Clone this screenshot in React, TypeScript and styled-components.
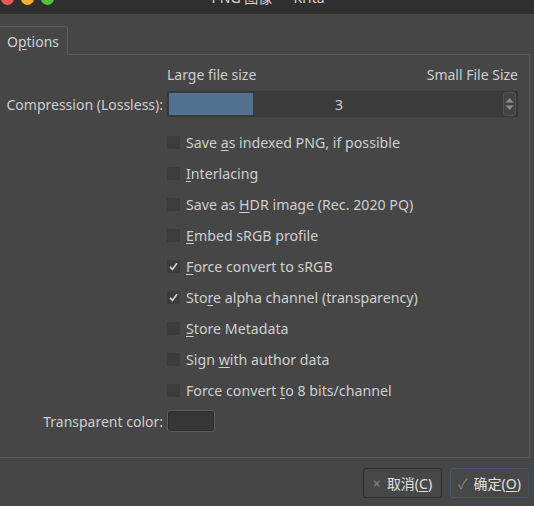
import { createGlobalStyle, styled } from "styled-components";

const GlobalStyle = createGlobalStyle`
  html, body {
    margin: 0;
    padding: 0;
    background: #464646;
  }
  body {
    font-family: "Noto Sans", "Noto Sans CJK SC", sans-serif;
    font-size: 14px;
    color: #cdcfd1;
    overflow: hidden;
  }
`;

interface CheckOption {
  label: React.ReactNode;
  checked?: boolean;
}

const options: CheckOption[] = [
  { label: <>Save <U>a</U>s indexed PNG, if possible</> },
  { label: <><U>I</U>nterlacing</> },
  { label: <>Save as <U>H</U>DR image (Rec. 2020 PQ)</> },
  { label: <><U>E</U>mbed sRGB profile</> },
  { label: <><U>F</U>orce convert to sRGB</>, checked: true },
  { label: <>Sto<U>r</U>e alpha channel (transparency)</>, checked: true },
  { label: <><U>S</U>tore Metadata</> },
  { label: <>Sign <U>w</U>ith author data</> },
  { label: <>Force convert <U>t</U>o 8 bits/channel</> },
];

function U({ children }: { children: React.ReactNode }) {
  return <Mnemonic>{children}</Mnemonic>;
}

export default function App() {
  return (
    <Window>
      <GlobalStyle />
      <TitleBar>
        <Lights>
          <Light $color="#ed5b55" />
          <Light $color="#f5b12a" />
          <Light $color="#56c23d" />
        </Lights>
        <Title>PNG 图像 — Krita</Title>
      </TitleBar>

      <TabBar>
        <Tab>
          O<U>p</U>tions
        </Tab>
      </TabBar>

      <Panel>
        <Row $height={17}>
          <span />
          <SizeHints>
            <span>Large file size</span>
            <span>Small File Size</span>
          </SizeHints>
        </Row>

        <Row $height={26} $top={8}>
          <Label>Compression (Lossless):</Label>
          <SpinSlider>
            <SliderFill style={{ width: `${(3 / 9) * 100 * 0.72}%` }} />
            <SliderValue>3</SliderValue>
            <SpinButtons>
              <svg width="9" height="20" viewBox="0 0 9 20">
                <path d="M4.5 4 L8.5 8.5 L0.5 8.5 Z" fill="#8e8e8e" />
                <path d="M4.5 16 L8.5 11.5 L0.5 11.5 Z" fill="#8e8e8e" />
              </svg>
            </SpinButtons>
          </SpinSlider>
        </Row>

        <CheckList>
          {options.map((opt, i) => (
            <Row key={i} $height={31}>
              <span />
              <CheckRow>
                <Box>
                  {opt.checked && (
                    <svg width="13" height="13" viewBox="0 0 13 13">
                      <path
                        d="M3 6.8 L5.4 9.4 L10 3.2"
                        fill="none"
                        stroke="#d4d4d4"
                        strokeWidth="1.6"
                      />
                    </svg>
                  )}
                </Box>
                <CheckText>{opt.label}</CheckText>
              </CheckRow>
            </Row>
          ))}
        </CheckList>

        <Row $height={22} $top={4}>
          <Label>Transparent color:</Label>
          <div>
            <ColorButton />
          </div>
        </Row>
      </Panel>

      <Footer>
        <DialogButton>
          <BtnIcon>×</BtnIcon>
          <span>
            取消(<U>C</U>)
          </span>
        </DialogButton>
        <DialogButton $primary>
          <BtnIcon>✓</BtnIcon>
          <span>
            确定(<U>O</U>)
          </span>
        </DialogButton>
      </Footer>
    </Window>
  );
}

const Window = styled.div`
  width: 534px;
  height: 506px;
  display: flex;
  flex-direction: column;
  background: #464646;
  overflow: hidden;
`;

const TitleBar = styled.div`
  position: relative;
  height: 14px;
  background: #2f2f2f;
  overflow: hidden;
  display: flex;
  justify-content: center;
`;

const Lights = styled.div`
  position: absolute;
  left: 1px;
  top: -8px;
  display: flex;
  gap: 7px;
`;

const Light = styled.div<{ $color: string }>`
  width: 13px;
  height: 13px;
  border-radius: 50%;
  background: ${(p) => p.$color};
`;

const Title = styled.div`
  margin-top: -12px;
  font-size: 14px;
  line-height: 20px;
  color: #d8d8d8;
  padding-left: 2px;
  white-space: nowrap;
`;

const TabBar = styled.div`
  display: flex;
  margin-top: 12px;
  height: 28px;
`;

const Tab = styled.div`
  width: 69px;
  box-sizing: border-box;
  margin-left: -1px;
  padding-left: 7px;
  border: 1px solid #5a5a5a;
  border-bottom: none;
  border-radius: 0 3px 0 0;
  background: #464646;
  display: flex;
  align-items: center;
  margin-bottom: -1px;
  position: relative;
  z-index: 1;
  color: #cfd3d6;
`;

const Panel = styled.div`
  margin-left: -1px;
  width: 531px;
  height: 404px;
  box-sizing: border-box;
  border: 1px solid #5a5a5a;
  padding: 11px 0 0 6px;
  display: flex;
  flex-direction: column;
`;

const Row = styled.div<{ $height: number; $top?: number }>`
  display: grid;
  grid-template-columns: 157px 351px;
  column-gap: 4px;
  align-items: center;
  height: ${(p) => p.$height}px;
  margin-top: ${(p) => p.$top ?? 0}px;
`;

const Label = styled.div`
  text-align: right;
  white-space: nowrap;
`;

const SizeHints = styled.div`
  display: flex;
  justify-content: space-between;
  line-height: 17px;
`;

const SpinSlider = styled.div`
  position: relative;
  height: 26px;
  box-sizing: border-box;
  background: #3b3b3b;
  border: 1px solid #363636;
  border-radius: 2px;
  display: flex;
  align-items: center;
`;

const SliderFill = styled.div`
  position: absolute;
  left: 1px;
  top: 1px;
  bottom: 1px;
  background: #52718e;
`;

const SliderValue = styled.span`
  position: relative;
  flex: 1;
  text-align: center;
  padding-left: 7px;
`;

const SpinButtons = styled.div`
  width: 11px;
  height: 22px;
  margin-right: 1px;
  border: 1px solid #555;
  border-radius: 3px;
  display: flex;
  align-items: center;
  justify-content: center;
  background: #434343;
`;

const CheckList = styled.div`
  display: flex;
  flex-direction: column;
  margin-top: 10px;
`;

const CheckRow = styled.div`
  display: flex;
  align-items: center;
  gap: 6px;
`;

const Box = styled.div`
  width: 13px;
  height: 13px;
  background: #3c3c3c;
  display: flex;
  align-items: center;
  justify-content: center;
`;

const CheckText = styled.span`
  white-space: nowrap;
  font-size: 14.2px;
`;

const Mnemonic = styled.span`
  text-decoration: underline;
  text-underline-offset: 2px;
`;

const ColorButton = styled.div`
  width: 48px;
  height: 22px;
  box-sizing: border-box;
  border: 1px solid #5c5c5c;
  border-radius: 3px;
  background: #363636;
  box-shadow: inset 0 0 0 1px #2e2e2e;
`;

const Footer = styled.div`
  display: flex;
  justify-content: flex-end;
  gap: 8px;
  padding: 10px 5px 0 0;
`;

const DialogButton = styled.button<{ $primary?: boolean }>`
  width: 79px;
  height: 30px;
  box-sizing: border-box;
  display: flex;
  align-items: center;
  justify-content: center;
  gap: 6px;
  border-radius: 3px;
  border: 1px solid ${(p) => (p.$primary ? "#3f5870" : "#2f2f2f")};
  background: #474747;
  color: #e0e0e0;
  font-family: "Noto Sans", "Noto Sans CJK SC", sans-serif;
  font-size: 14px;
  padding: 0;
`;

const BtnIcon = styled.span`
  color: #8a8a8a;
  font-size: 14px;
`;
